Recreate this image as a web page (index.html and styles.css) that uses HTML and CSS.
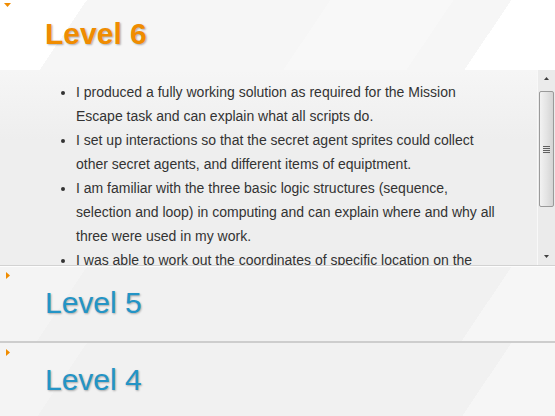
FILE: index.html
```html
<!DOCTYPE html>
<html lang="en">

<head>
    <meta charset="UTF-8">
    <meta name="viewport" content="width=device-width, initial-scale=1.0">
    <title>Mission Escape - Levels</title>
    <link rel="stylesheet" href="styles.css">
</head>

<body>
    <div class="accordion">
        <!-- Level 6 (open) -->
        <div class="section open">
            <h3 class="section-head">
                <svg class="arrow" width="7" height="4" viewBox="0 0 7 4"><polygon points="0,0 7,0 3.5,4" /></svg>
                <span class="title">Level 6</span>
            </h3>
            <div class="section-body">
                <div class="body-text">
                    <ul>
                        <li>I produced a fully working solution as required for the Mission Escape task and can explain what all scripts do.</li>
                        <li>I set up interactions so that the secret agent sprites could collect other secret agents, and different items of equiptment.</li>
                        <li>I am familiar with the three basic logic structures (sequence, selection and loop) in computing and can explain where and why all three were used in my work.</li>
                        <li>I was able to work out the coordinates of specific location on the stage and used them in my scripts.</li>
                        <li>I tested my game and fixed any problems I found.</li>
                    </ul>
                </div>
                <!-- fake scrollbar -->
                <div class="scrollbar">
                    <div class="sb-button">
                        <svg width="5" height="3" viewBox="0 0 5 3"><polygon points="2.5,0 5,3 0,3" /></svg>
                    </div>
                    <div class="sb-track">
                        <div class="sb-thumb">
                            <span class="grip"></span>
                        </div>
                    </div>
                    <div class="sb-button">
                        <svg width="5" height="3" viewBox="0 0 5 3"><polygon points="0,0 5,0 2.5,3" /></svg>
                    </div>
                </div>
            </div>
        </div>

        <!-- Level 5 -->
        <div class="section closed">
            <h3 class="section-head">
                <svg class="arrow" width="4" height="7" viewBox="0 0 4 7"><polygon points="0,0 4,3.5 0,7" /></svg>
                <span class="title">Level 5</span>
            </h3>
        </div>

        <!-- Level 4 -->
        <div class="section closed last">
            <h3 class="section-head">
                <svg class="arrow" width="4" height="7" viewBox="0 0 4 7"><polygon points="0,0 4,3.5 0,7" /></svg>
                <span class="title">Level 4</span>
            </h3>
        </div>
    </div>
</body>

</html>
```
FILE: styles.css
```css
/* General Styles */
body {
    margin: 0;
    font-family: "Liberation Sans", Arial, sans-serif;
    color: #333;
    background-color: #f3f3f3;
    overflow: hidden;
}

.accordion {
    width: 555px;
}

.section-head {
    margin: 0;
    box-sizing: border-box;
    font-weight: normal;
}

.arrow {
    display: block;
    fill: #f08c00;
}

.title {
    display: block;
    padding-left: 45px;
    font-size: 30px;
    line-height: 36px;
    text-shadow: 1px 1px 2px rgba(0, 0, 0, 0.3);
}

/* Open panel header */
.open .section-head {
    height: 70px;
    padding-top: 3px;
    background: linear-gradient(124deg, #fff 72px, #f6f6f6 72px, #f6f6f6 274px, #f8f8f8 274px, #f8f8f8 376px, #f6f6f6 376px, #f6f6f6 424px, #fff 424px);
}

.open .arrow {
    margin-left: 4px;
}

.open .title {
    margin-top: 9px;
    font-weight: bold;
    color: #f08c00;
}

/* Closed panel headers */
.closed .section-head {
    height: 75px;
    padding-top: 5px;
    border-top: 1px solid #fdfdfd;
    background: linear-gradient(124deg, #f4f4f4 72px, #f1f1f1 72px, #f1f1f1 424px, #f6f6f6 424px);
}

.closed .arrow {
    margin-left: 6px;
}

.closed .title {
    margin-top: 6px;
    color: #2394c6;
}

.closed {
    border-bottom: 2px solid #cdcdcd;
}

.closed.last {
    border-bottom: none;
}

.closed.last .section-head {
    padding-top: 6px;
    border-top: none;
}

/* Panel content */
.section-body {
    display: flex;
    height: 195px;
    border-bottom: 1px solid #d2d2d2;
    background: linear-gradient(#f6f6f6, #eeeeee 70px, #eeeeee);
    overflow: hidden;
}

.body-text {
    flex: 1;
    overflow: hidden;
}

.body-text ul {
    margin: 0;
    padding: 10px 33px 0 76px;
    font-size: 14px;
    line-height: 24px;
    color: #333;
}

/* Scrollbar */
.scrollbar {
    display: flex;
    flex-direction: column;
    width: 17px;
    border-left: 1px solid #f8f8f8;
    background-color: #ebebeb;
}

.sb-button {
    display: flex;
    align-items: center;
    justify-content: center;
    height: 17px;
}

.sb-button svg {
    fill: #404040;
}

.sb-track {
    flex: 1;
    padding: 4px 0 0 1px;
}

.sb-thumb {
    display: flex;
    align-items: center;
    justify-content: center;
    box-sizing: border-box;
    width: 15px;
    height: 116px;
    border: 1px solid #9a9a9a;
    border-radius: 2px;
    background: linear-gradient(to right, #f2f2f2, #e4e4e4 50%, #d4d4d4);
}

.grip {
    width: 7px;
    height: 7px;
    background: repeating-linear-gradient(#606060 0, #606060 1px, transparent 1px, transparent 2px);
}
```
